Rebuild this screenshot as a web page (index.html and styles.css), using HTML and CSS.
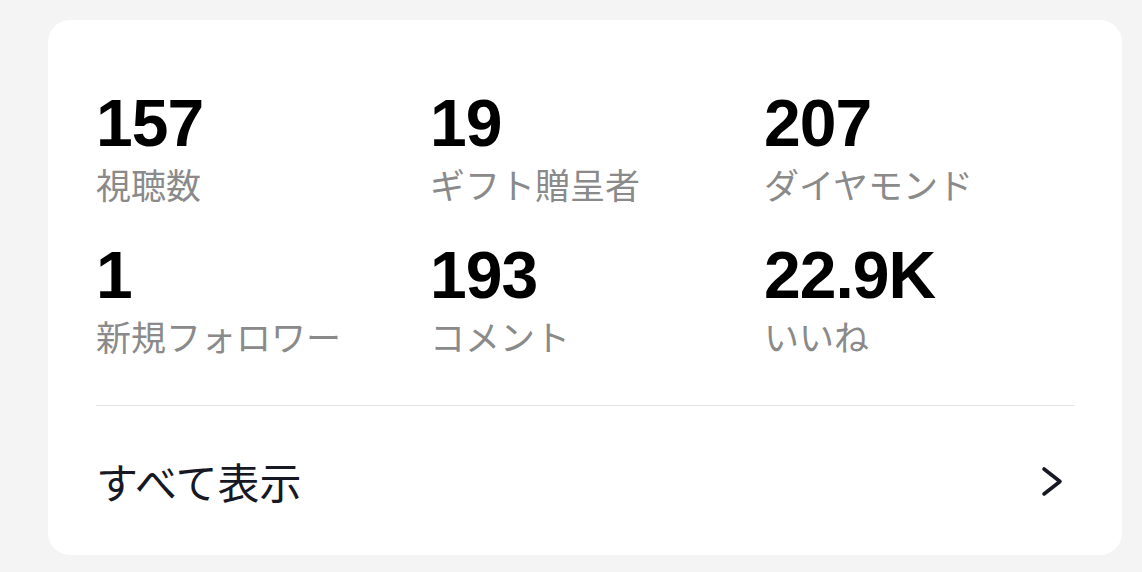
FILE: index.html
```html
<!DOCTYPE html>
<html>
<head>
  <title>ライブの概要</title>
  <link rel="stylesheet" href="styles.css">
</head>
<body>

  <div class="card">
    <div class="stats">
      <div class="stat">
        <div class="stat-value">157</div>
        <div class="stat-label">視聴数</div>
      </div>
      <div class="stat">
        <div class="stat-value">19</div>
        <div class="stat-label">ギフト贈呈者</div>
      </div>
      <div class="stat">
        <div class="stat-value">207</div>
        <div class="stat-label">ダイヤモンド</div>
      </div>
      <div class="stat">
        <div class="stat-value">1</div>
        <div class="stat-label">新規フォロワー</div>
      </div>
      <div class="stat">
        <div class="stat-value">193</div>
        <div class="stat-label">コメント</div>
      </div>
      <div class="stat">
        <div class="stat-value">22.9K</div>
        <div class="stat-label">いいね</div>
      </div>
    </div>

    <div class="show-all">
      <span class="show-all-text">すべて表示</span>
      <svg class="chevron" width="24" height="32" viewBox="0 0 24 32">
        <polyline points="4,4 20,16.5 4,29" fill="none" stroke="#161823" stroke-width="3.6" stroke-linecap="round" stroke-linejoin="round"/>
      </svg>
    </div>
  </div>

</body>
</html>
```

FILE: styles.css
```css
body {
  margin: 0;
  padding: 20px 20px 0 48px;
  background-color: #f4f4f4;
  font-family: "Liberation Sans", "Noto Sans CJK JP", sans-serif;
}

.card {
  background-color: #fff;
  border-radius: 22px;
  padding: 70px 47px 0 48px;
}

.stats {
  display: grid;
  grid-template-columns: repeat(3, 1fr);
  column-gap: 23px;
  row-gap: 37px;
}

.stat-value {
  font-size: 66px;
  font-weight: bold;
  line-height: 66px;
  color: #000;
  letter-spacing: -1px;
}

.stat-label {
  margin-top: 6px;
  font-family: "Noto Sans CJK JP", sans-serif;
  font-size: 35px;
  line-height: 43px;
  color: #8a8a8a;
}

.show-all {
  margin-top: 48px;
  border-top: 1px solid #e3e3e3;
  height: 149px;
  display: flex;
  align-items: center;
  justify-content: space-between;
}

.show-all-text {
  font-family: "Noto Sans CJK JP", sans-serif;
  font-size: 42px;
  color: #161823;
}

.chevron {
  margin-right: 11px;
}
```
